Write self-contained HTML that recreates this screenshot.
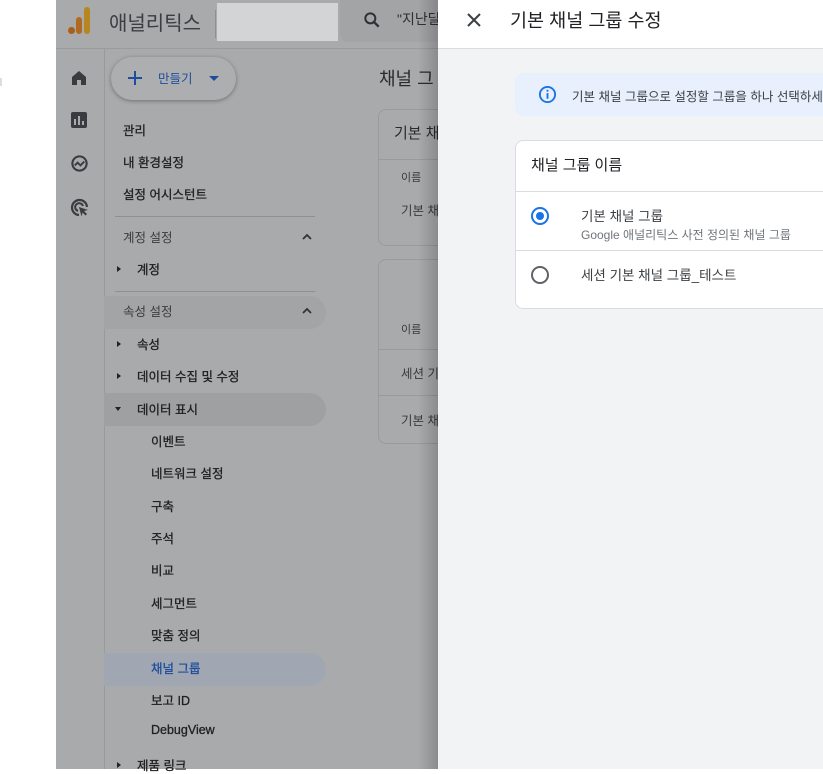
<!DOCTYPE html>
<html><head><meta charset="utf-8"><style>
*{margin:0;padding:0;box-sizing:border-box}
body{width:823px;height:769px;overflow:hidden;background:#fff;font-family:"Liberation Sans","Noto Sans CJK KR",sans-serif;position:relative}
.a{position:absolute}
.dim{left:56px;top:0;width:382px;height:769px;background:#a9aaac}
.t{position:absolute;font-size:12.5px;color:#1e1f21;font-weight:normal;-webkit-text-stroke:0.3px #1e1f21;white-space:nowrap}
.s{position:absolute;font-size:12.5px;color:#3a3b3d;white-space:nowrap}
</style></head><body>
<div class="a" style="left:0;top:78px;width:2px;height:8px;background:#ddd"></div>
<div class="a dim"></div>
<div class="a" style="left:56px;top:48px;width:382px;height:1px;background:#9a9b9d"></div>
<div class="a" style="left:68px;top:27px;width:7px;height:7px;border-radius:50%;background:#a85f18"></div>
<div class="a" style="left:76px;top:17px;width:6px;height:17px;border-radius:3px;background:#b06a1f"></div>
<div class="a" style="left:84px;top:7px;width:6px;height:27px;border-radius:3px;background:#b8861f"></div>
<div class="a" style="left:109px;top:7px;font-size:20px;color:#3c3d40">애널리틱스</div>
<div class="a" style="left:215px;top:10px;width:1px;height:28px;background:#8e8f91"></div>
<div class="a" style="left:217px;top:3px;width:121px;height:38px;background:#d3d4d6"></div>
<div class="a" style="left:340px;top:0;width:98px;height:42px;background:#a3a4a6;border-radius:0 0 0 8px"></div>
<svg class="a" style="left:362px;top:10px" width="20" height="20" viewBox="0 0 24 24"><circle cx="10" cy="10" r="6" fill="none" stroke="#2f3033" stroke-width="2.4"/><path d="M14.5 14.5L20 20" stroke="#2f3033" stroke-width="2.8"/></svg>
<div class="a" style="left:397px;top:9px;font-size:14px;color:#2f3033">"지난달</div>
<div class="a" style="left:104px;top:49px;width:1px;height:720px;background:#999a9c"></div>
<svg class="a" style="left:70px;top:69px" width="18" height="18" viewBox="0 0 18 18"><path d="M2 8L9 2l7 6v8h-5v-5H7v5H2z" fill="#3a3b3e"/></svg>
<div class="a" style="left:71px;top:112px;width:16px;height:16px;background:#3a3b3e;border-radius:2px"></div>
<div class="a" style="left:74px;top:119px;width:2px;height:6px;background:#a9aaac"></div>
<div class="a" style="left:78px;top:116px;width:2px;height:9px;background:#a9aaac"></div>
<div class="a" style="left:82px;top:121px;width:2px;height:4px;background:#a9aaac"></div>
<svg class="a" style="left:70px;top:154px" width="19" height="19" viewBox="0 0 20 20"><circle cx="10" cy="10" r="7.5" fill="none" stroke="#3a3b3e" stroke-width="2.2"/><path d="M5 12l3-3 3 3 4-4" fill="none" stroke="#3a3b3e" stroke-width="2"/></svg>
<svg class="a" style="left:70px;top:198px" width="20" height="20" viewBox="0 0 20 20"><path d="M9 17A7.5 7.5 0 1 1 17 9" fill="none" stroke="#3a3b3e" stroke-width="2.2"/><path d="M8 13a4 4 0 1 1 5-5" fill="none" stroke="#3a3b3e" stroke-width="2"/><path d="M9 9l9 3-4 1 3 3-1.5 1.5-3-3-1 4z" fill="#3a3b3e"/></svg>
<div class="a" style="left:111px;top:57px;width:125px;height:43px;border-radius:22px;background:#adaeb0;box-shadow:0 1px 4px rgba(0,0,0,.35)"></div>
<svg class="a" style="left:127px;top:70px" width="16" height="16" viewBox="0 0 16 16"><path d="M8 1v14M1 8h14" stroke="#1e4d9e" stroke-width="2"/></svg>
<div class="a" style="left:158px;top:68px;font-size:12.5px;color:#1e4d9e">만들기</div>
<div class="a" style="left:209px;top:76px;border:5px solid transparent;border-top:5px solid #1e4d9e"></div>
<div class="t" style="left:123px;top:120px">관리</div>
<div class="t" style="left:123px;top:152px">내 환경설정</div>
<div class="t" style="left:123px;top:184px">설정 어시스턴트</div>
<div class="a" style="left:115px;top:216px;width:200px;height:1px;background:#8f9092"></div>
<div class="s" style="left:123px;top:227px">계정 설정</div>
<svg class="a" style="left:301px;top:233px" width="12" height="8" viewBox="0 0 12 8"><path d="M2 6l4-4 4 4" fill="none" stroke="#333" stroke-width="1.8"/></svg>
<div class="a" style="left:117px;top:266px;border:3px solid transparent;border-left:4px solid #222"></div>
<div class="t" style="left:137px;top:259px">계정</div>
<div class="a" style="left:115px;top:291px;width:200px;height:1px;background:#8f9092"></div>
<div class="a" style="left:104px;top:296px;width:222px;height:33px;border-radius:0 17px 17px 0;background:#a3a4a6"></div>
<div class="s" style="left:123px;top:301px">속성 설정</div>
<svg class="a" style="left:301px;top:307px" width="12" height="8" viewBox="0 0 12 8"><path d="M2 6l4-4 4 4" fill="none" stroke="#333" stroke-width="1.8"/></svg>
<div class="a" style="left:117px;top:341px;border:3px solid transparent;border-left:4px solid #222"></div>
<div class="t" style="left:137px;top:334px">속성</div>
<div class="a" style="left:117px;top:373px;border:3px solid transparent;border-left:4px solid #222"></div>
<div class="t" style="left:137px;top:366px">데이터 수집 및 수정</div>
<div class="a" style="left:104px;top:393px;width:222px;height:33px;border-radius:0 17px 17px 0;background:#9fa0a2"></div>
<div class="a" style="left:115px;top:407px;border:3px solid transparent;border-top:4px solid #222"></div>
<div class="t" style="left:137px;top:399px">데이터 표시</div>
<div class="t" style="left:151px;top:431px">이벤트</div>
<div class="t" style="left:151px;top:463px">네트워크 설정</div>
<div class="t" style="left:151px;top:496px">구축</div>
<div class="t" style="left:151px;top:528px">주석</div>
<div class="t" style="left:151px;top:560px">비교</div>
<div class="t" style="left:151px;top:593px">세그먼트</div>
<div class="t" style="left:151px;top:625px">맞춤 정의</div>
<div class="a" style="left:104px;top:653px;width:222px;height:33px;border-radius:0 17px 17px 0;background:#a0a6b2"></div>
<div class="t" style="left:151px;top:658px;color:#1e4d9e;-webkit-text-stroke:0.3px #1e4d9e">채널 그룹</div>
<div class="t" style="left:151px;top:690px">보고 ID</div>
<div class="t" style="left:151px;top:723px">DebugView</div>
<div class="a" style="left:117px;top:762px;border:3px solid transparent;border-left:4px solid #222"></div>
<div class="t" style="left:137px;top:755px">제품 링크</div>
<div class="a" style="left:379px;top:65px;font-size:18px;color:#2a2b2d">채널 그</div>
<div class="a" style="left:378px;top:109px;width:80px;height:137px;border:1px solid #999a9c;border-radius:8px"></div>
<div class="a" style="left:378px;top:159px;width:80px;height:1px;background:#999a9c"></div>
<div class="a" style="left:394px;top:122px;font-size:15px;color:#2a2b2d">기본 채</div>
<div class="s" style="left:401px;top:169px;font-size:11px">이름</div>
<div class="s" style="left:401px;top:200px">기본 채</div>
<div class="a" style="left:378px;top:259px;width:80px;height:185px;border:1px solid #999a9c;border-radius:8px"></div>
<div class="s" style="left:401px;top:321px;font-size:11px">이름</div>
<div class="a" style="left:378px;top:349px;width:80px;height:1px;background:#999a9c"></div>
<div class="s" style="left:401px;top:363px">세션 기</div>
<div class="a" style="left:378px;top:395px;width:80px;height:1px;background:#999a9c"></div>
<div class="s" style="left:401px;top:410px">기본 채</div>
<div class="a" style="left:418px;top:0;width:20px;height:769px;background:linear-gradient(90deg,rgba(0,0,0,0),rgba(0,0,0,.18))"></div>
<div class="a" style="left:438px;top:0;width:385px;height:769px;background:#f1f3f4"></div>
<div class="a" style="left:438px;top:0;width:385px;height:49px;background:#fff;border-bottom:1px solid #dadce0"></div>
<svg class="a" style="left:466px;top:12px" width="16" height="16" viewBox="0 0 16 16"><path d="M2 2L14 14M14 2L2 14" stroke="#3c4043" stroke-width="2"/></svg>
<div class="a" style="left:510px;top:7px;font-size:18.5px;color:#202124">기본 채널 그룹 수정</div>
<div class="a" style="left:515px;top:73px;width:308px;height:43px;background:#e8f0fe;border-radius:8px 0 0 8px"></div>
<svg class="a" style="left:538px;top:85px" width="19" height="19" viewBox="0 0 20 20"><circle cx="10" cy="10" r="8" fill="none" stroke="#1a73e8" stroke-width="2"/><rect x="9" y="8.5" width="2" height="6" fill="#1a73e8"/><rect x="9" y="5" width="2" height="2" fill="#1a73e8"/></svg>
<div class="a" style="left:572px;top:86px;font-size:12.5px;color:#3c4043;white-space:nowrap">기본 채널 그룹으로 설정할 그룹을 하나 선택하세요</div>
<div class="a" style="left:515px;top:140px;width:320px;height:169px;background:#fff;border:1px solid #dadce0;border-radius:8px"></div>
<div class="a" style="left:531px;top:154px;font-size:15px;color:#202124">채널 그룹 이름</div>
<div class="a" style="left:516px;top:191px;width:307px;height:1px;background:#dadce0"></div>
<div class="a" style="left:531px;top:207px;width:18px;height:18px;border:2px solid #1a73e8;border-radius:50%"></div>
<div class="a" style="left:536px;top:212px;width:8px;height:8px;background:#1a73e8;border-radius:50%"></div>
<div class="a" style="left:581px;top:205px;font-size:13.5px;color:#3c4043">기본 채널 그룹</div>
<div class="a" style="left:581px;top:226px;font-size:12px;color:#70757a;white-space:nowrap">Google 애널리틱스 사전 정의된 채널 그룹</div>
<div class="a" style="left:516px;top:250px;width:307px;height:1px;background:#dadce0"></div>
<div class="a" style="left:531px;top:266px;width:18px;height:18px;border:2px solid #5f6368;border-radius:50%"></div>
<div class="a" style="left:581px;top:264px;font-size:13.5px;color:#3c4043">세션 기본 채널 그룹_테스트</div>
</body></html>
